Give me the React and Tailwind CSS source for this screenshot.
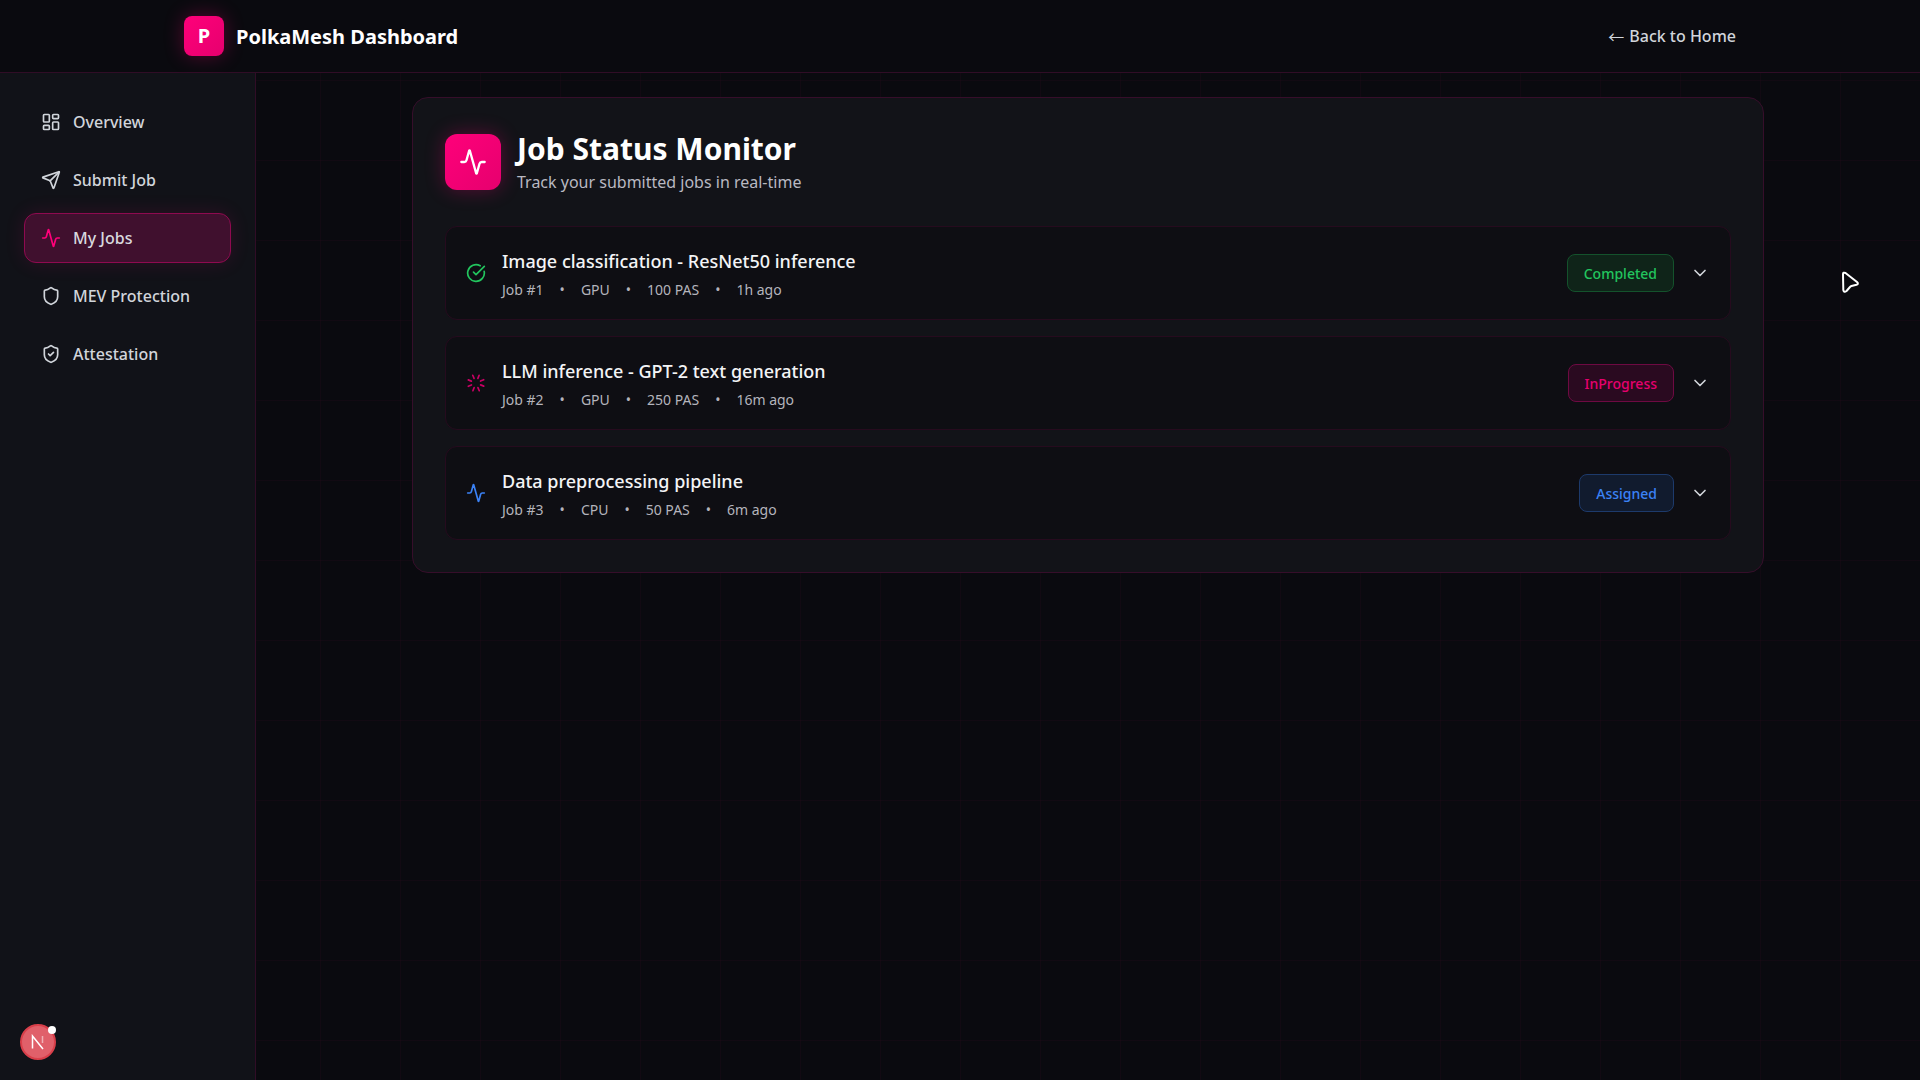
import React from "react";
import { Activity, LayoutDashboard, Send, Shield, ShieldCheck, CircleCheckBig, Loader, ChevronDown } from "lucide-react";

const nav = [
  { label: "Overview", icon: LayoutDashboard },
  { label: "Submit Job", icon: Send },
  { label: "My Jobs", icon: Activity, active: true },
  { label: "MEV Protection", icon: Shield },
  { label: "Attestation", icon: ShieldCheck },
];

const jobs = [
  {
    title: "Image classification - ResNet50 inference",
    meta: ["Job #1", "GPU", "100 PAS", "1h ago"],
    status: "Completed",
    icon: <CircleCheckBig className="w-5 h-5 text-[#22c55e]" />,
    badge: "bg-[#0f2419] border-[#14522c] text-[#22c55e]",
  },
  {
    title: "LLM inference - GPT-2 text generation",
    meta: ["Job #2", "GPU", "250 PAS", "16m ago"],
    status: "InProgress",
    icon: <Loader className="w-5 h-5 text-[#c80064] rotate-[22deg]" />,
    badge: "bg-[#2a0a20] border-[#6e0a42] text-[#e6006e]",
  },
  {
    title: "Data preprocessing pipeline",
    meta: ["Job #3", "CPU", "50 PAS", "6m ago"],
    status: "Assigned",
    icon: <Activity className="w-5 h-5 text-[#3b82f6]" />,
    badge: "bg-[#111b2e] border-[#1d3a6b] text-[#3b82f6]",
  },
];

export default function App() {
  return (
    <div className="relative h-screen overflow-hidden flex flex-col bg-[#0a0a0f] bg-[linear-gradient(rgba(255,0,122,0.03)_1px,transparent_1px),linear-gradient(90deg,rgba(255,0,122,0.03)_1px,transparent_1px)] bg-[size:80px_80px] text-white font-['Noto_Sans',sans-serif]">
      <header className="border-b border-[#300d26] bg-[#0a0a0f]">
        <div className="max-w-[1600px] mx-auto px-6 py-4 flex items-center justify-between">
          <div className="flex items-center gap-3">
            <div className="w-10 h-10 rounded-lg bg-gradient-to-br from-[#ff007a] to-[#e6006e] shadow-[0_0_20px_rgba(255,0,122,0.3)] flex items-center justify-center text-xl font-bold">P</div>
            <span className="text-xl font-bold pt-0.5">PolkaMesh Dashboard</span>
          </div>
          <span className="flex items-center gap-[5px] text-base font-medium text-[#d1d5db]">
            <span className="font-['Noto_Sans_CJK_SC','Noto_Sans',sans-serif] font-normal leading-none">←</span>
            <span>Back to Home</span>
          </span>
        </div>
      </header>

      <div className="flex flex-1 min-h-0">
        <aside className="w-64 shrink-0 border-r border-[#300d26] bg-[#111218] p-6 flex flex-col gap-2">
          {nav.map(({ label, icon: Icon, active }) => (
            <div
              key={label}
              className={
                active
                  ? "flex items-center gap-3 px-4 py-3 rounded-xl border border-[#8f0a50] bg-[#40102e] text-[#d8d8de] shadow-[0_0_20px_rgba(255,0,122,0.12)]"
                  : "flex items-center gap-3 px-4 py-3 rounded-xl border border-transparent text-[#d1d5db]"
              }
            >
              <Icon className={active ? "w-5 h-5 text-[#ff007a]" : "w-5 h-5"} />
              <span className="text-base font-medium">{label}</span>
            </div>
          ))}
        </aside>

        <main className="flex-1 min-w-0 pt-6">
          <div className="max-w-[1400px] mx-auto px-6">
            <section className="rounded-2xl border border-[#360e2a] bg-[#121318] p-8">
              <div className="flex items-center gap-4 mb-8">
                <div className="w-14 h-14 rounded-xl bg-gradient-to-br from-[#ff007a] to-[#e6006e] shadow-[0_0_20px_rgba(255,0,122,0.3)] flex items-center justify-center">
                  <Activity className="w-7 h-7 text-white" />
                </div>
                <div>
                  <h1 className="text-3xl leading-[38px] font-bold">Job Status Monitor</h1>
                  <p className="mt-0.5 text-base text-[#b9b9c2]">Track your submitted jobs in real-time</p>
                </div>
              </div>

              <div className="flex flex-col gap-4">
                {jobs.map((job) => (
                  <div key={job.title} className="flex items-center justify-between rounded-xl border border-[#260b1e] bg-[#0e0e13] p-5">
                    <div className="flex items-center gap-4">
                      {job.icon}
                      <div>
                        <div className="text-lg font-medium text-[#f3f4f6]">{job.title}</div>
                        <div className="mt-1.5 flex items-center gap-4 text-sm leading-[18px] text-[#b4b4bc]">
                          {job.meta.map((m, i) => (
                            <React.Fragment key={m}>
                              {i > 0 && <span>•</span>}
                              <span>{m}</span>
                            </React.Fragment>
                          ))}
                        </div>
                      </div>
                    </div>
                    <div className="flex items-center gap-4">
                      <span className={"px-4 pt-[9px] pb-[7px] rounded-lg border text-sm font-medium " + job.badge}>{job.status}</span>
                      <ChevronDown className="w-5 h-5 text-[#d1d5db]" />
                    </div>
                  </div>
                ))}
              </div>
            </section>
          </div>
        </main>
      </div>

      <svg className="absolute left-[1838px] top-[268px]" width="26" height="28" viewBox="0 0 26 28" fill="#0a0a0f" stroke="#ffffff" strokeWidth="2" strokeLinejoin="round">
        <path d="M5 6Q5 4 7.5 5L19 14Q21 16 18.5 16.8L13.5 18Q12.5 18.3 12 19L8.5 23Q6 25 5.3 22Z" />
      </svg>

      <div className="absolute left-5 bottom-5 w-9 h-9 rounded-full bg-[#e0606a] border-2 border-[#d93f4a] flex items-center justify-center">
        <svg width="16" height="16" viewBox="0 0 16 16" fill="none">
          <path d="M2.5 14.5V2L13 15" stroke="#ffffff" strokeWidth="1.5" />
          <path d="M12.5 2V9" stroke="#ffffff" strokeOpacity="0.5" strokeWidth="1.5" />
        </svg>
        <span className="absolute left-[26px] top-[0px] w-2 h-2 rounded-full bg-white" />
      </div>
    </div>
  );
}
